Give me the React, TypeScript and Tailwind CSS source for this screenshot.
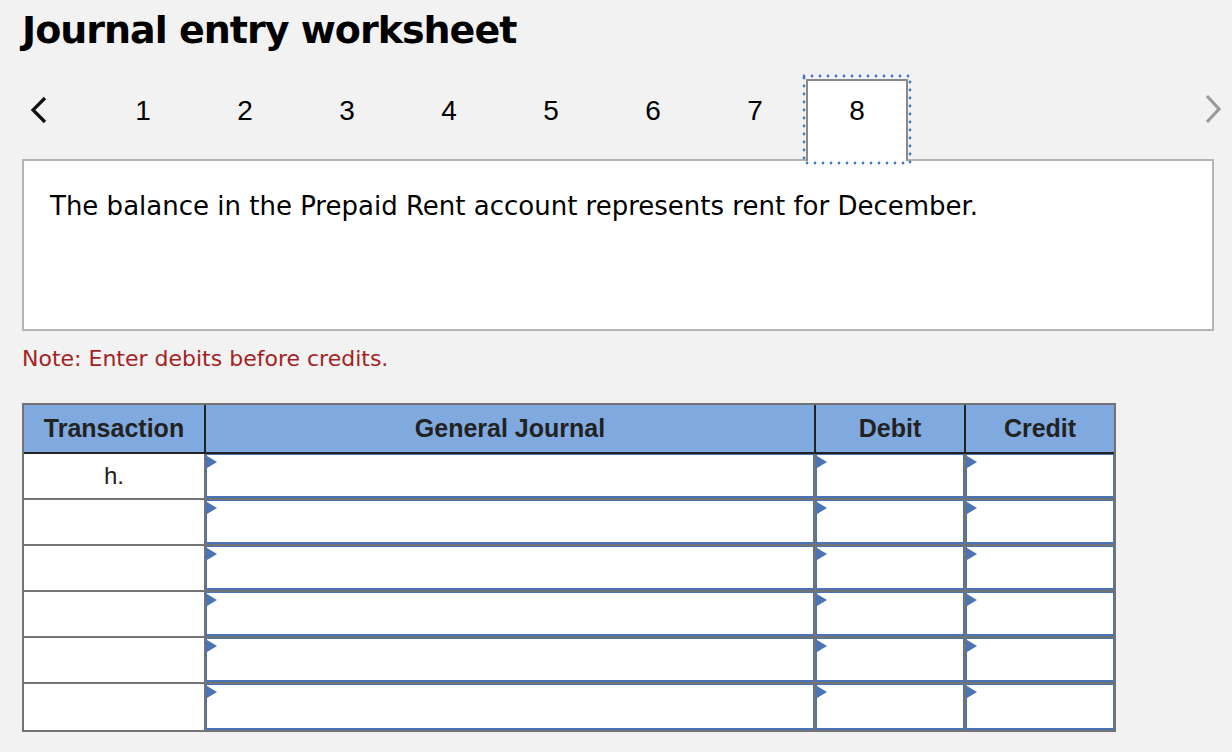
import React from "react"

const tabs = [1, 2, 3, 4, 5, 6, 7, 8]
const rows = ["h.", "", "", "", "", ""]

const Marker = () => (
  <svg width="10" height="12" viewBox="0 0 10 12" className="mt-[1px] shrink-0">
    <polygon points="0,0 10,6 0,12" fill="#4a74b4" />
  </svg>
)

const EntryInput = () => (
  <div className="flex h-full w-full items-start border-x border-t border-b-2 border-[#4a74b4] bg-white">
    <Marker />
  </div>
)

const App = () => {
  return (
    <div className="min-h-[752px] bg-[#f2f2f2] pl-[22px] pr-[6px] text-black">
      {/* Title */}
      <h1 className="pt-[7px] text-[38px] leading-[46px] font-bold tracking-[-1px] [font-family:'DejaVu_Sans',sans-serif]">
        Journal entry worksheet
      </h1>

      {/* Step tabs */}
      <div className="mt-[26px] flex h-[80px] items-start">
        <div className="w-[70px] pl-[8px] pt-[17px]">
          <svg width="18" height="28" viewBox="0 0 18 28">
            <polyline points="15,2 3,14 15,26" fill="none" stroke="#111" strokeWidth="3.2" />
          </svg>
        </div>
        {tabs.map((n) => (
          <div
            key={n}
            className={`relative flex h-[82px] w-[102px] justify-center border-2 border-b-0 pt-[14px] text-[28px] leading-[32px] [font-family:'Liberation_Sans',Arial,sans-serif] ${
              n === 8 ? "z-10 border-[#8a8a8a] bg-white" : "border-transparent"
            }`}
          >
            {n}
            {n === 8 && (
              <svg className="absolute left-[-7px] top-[-8px]" width="112" height="93" viewBox="0 0 112 93">
                <rect
                  x="3"
                  y="3"
                  width="106"
                  height="87"
                  fill="none"
                  stroke="#4677c4"
                  strokeWidth="2.8"
                  strokeDasharray="0 8"
                  strokeLinecap="round"
                />
              </svg>
            )}
          </div>
        ))}
        <div className="ml-auto pt-[15px] pr-[4px]">
          <svg width="18" height="30" viewBox="0 0 18 30">
            <polyline points="3,2 15,15 3,28" fill="none" stroke="#9b9b9b" strokeWidth="3.2" />
          </svg>
        </div>
      </div>

      {/* Question box */}
      <div className="h-[172px] w-[1192px] border-2 border-[#b4b4b4] bg-white pl-[26px] pt-[29px] text-[26px] leading-[32px] [font-family:'DejaVu_Sans',sans-serif]">
        The balance in the Prepaid Rent account represents rent for December.
      </div>

      <p className="mt-[14px] text-[22px] leading-[28px] text-[#a3231f] [font-family:'DejaVu_Sans',sans-serif]">
        Note: Enter debits before credits.
      </p>

      {/* Journal table */}
      <div className="mt-[30px] w-[1094px] border-2 border-[#737373] [font-family:'Liberation_Sans',Arial,sans-serif]">
        <div className="flex h-[49px] border-b-2 border-[#222] bg-[#80aadf] text-[25px] font-bold text-[#222]">
          <div className="flex w-[182px] items-center justify-center border-r-2 border-[#222]">Transaction</div>
          <div className="flex w-[610px] items-center justify-center border-r-2 border-[#222]">General Journal</div>
          <div className="flex w-[150px] items-center justify-center border-r-2 border-[#222]">Debit</div>
          <div className="flex w-[148px] items-center justify-center">Credit</div>
        </div>
        {rows.map((label, i) => (
          <div
            key={i}
            className={`flex h-[46px] ${i < rows.length - 1 ? "border-b-2 border-[#737373]" : "h-[44px]"}`}
          >
            <div className="flex w-[182px] items-center justify-center border-r-2 border-[#737373] bg-white text-[24px] text-[#222]">
              {label}
            </div>
            <div className="w-[610px] border-r-2 border-[#737373]">
              <EntryInput />
            </div>
            <div className="w-[150px] border-r-2 border-[#737373]">
              <EntryInput />
            </div>
            <div className="w-[148px]">
              <EntryInput />
            </div>
          </div>
        ))}
      </div>
    </div>
  )
}

export default App
